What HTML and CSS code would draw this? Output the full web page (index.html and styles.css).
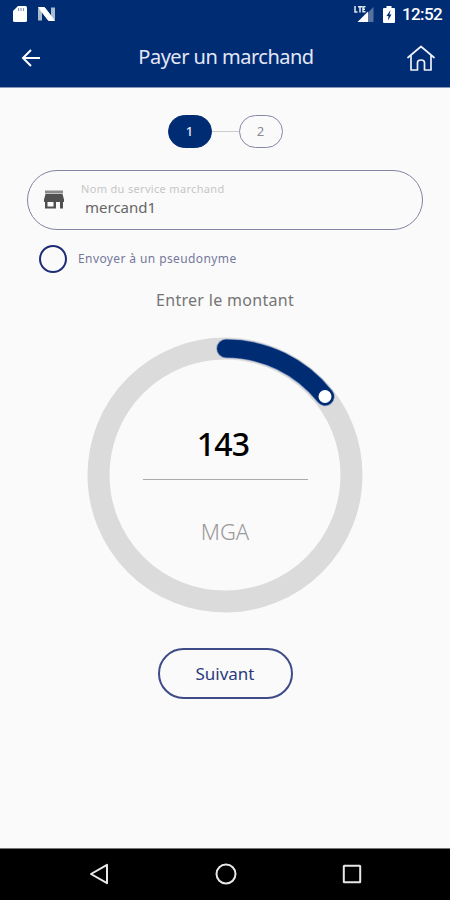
FILE: index.html
```html
<!DOCTYPE html>
<html lang="fr">
<head>
    <meta charset="UTF-8">
    <meta name="viewport" content="width=device-width, initial-scale=1.0">
    <title>Payer un marchand</title>
    <link rel="stylesheet" href="styles.css">
</head>
<body>
    <header class="header">
        <div class="status-bar">
            <svg class="sd" width="14" height="16" viewBox="0 0 14 16">
                <path d="M5 0h7.5Q14 0 14 1.500V14.500Q14 16 12.500 16H1.500Q0 16 0 14.500V5z" fill="#fff"/>
                <path d="M5.500 2v3M8 2v3M10.500 2v3" stroke="#8c98b5" stroke-width="1.200"/>
            </svg>
            <svg class="nougat" width="17" height="14" viewBox="0 0 17 14">
                <path d="M0 1l4 3v9.500H0zM17 13l-4-3V0.500h4z" fill="#a9bccf"/>
                <path d="M0.500 0.500H6.500L16.500 13.500H10.500z" fill="#fff" stroke="#fff"/>
            </svg>
            <svg class="signal" width="20" height="16" viewBox="0 0 20 16">
                <path d="M19.500 1v15H14V6.500z" fill="#56739f"/>
                <path d="M14 5.500V16H3.500z" fill="#fff"/>
                <path d="M1 0v6h2.500M4 0.800h4M6 0.800v5.700M11.500 0.800H9v5h2.500M9 3.300h2" fill="none" stroke="#e4e8f0" stroke-width="1.500"/>
            </svg>
            <svg class="battery" width="12" height="17" viewBox="0 0 12 17">
                <path d="M3.500 0h5v2H11q1 0 1 1v13q0 1-1 1H1q-1 0-1-1V3q0-1 1-1h2.500z" fill="#fff"/>
                <path d="M7.500 4L3.500 10H5.500L5 14.500L8.500 8.500H6.500z" fill="#002c74"/>
            </svg>
            <span class="clock">12:52</span>
        </div>
        <div class="title-bar">
            <svg class="back" width="20" height="18" viewBox="0 0 20 18">
                <path d="M19 9H2M10 1L2 9l8 8" fill="none" stroke="#fff" stroke-width="2"/>
            </svg>
            <h1>Payer un marchand</h1>
            <svg class="home" width="28" height="26" viewBox="0 0 28 26">
                <path d="M1 12.500L14 1.500L27 12.500M4 10.500V25H10.500V17.500Q10.500 15 14 15T17.500 17.500V25H24V10.500" fill="none" stroke="#eef0f8" stroke-width="1.700" stroke-linecap="round" stroke-linejoin="round"/>
            </svg>
        </div>
    </header>

    <main class="content">
        <div class="steps">
            <span class="step active">1</span>
            <span class="line"></span>
            <span class="step">2</span>
        </div>

        <div class="field">
            <svg width="20" height="19" viewBox="0 0 20 19">
                <path d="M1 0.500h18v3H1z" fill="#8a8a8a"/>
                <path d="M1.500 4h17L20 9.500V12h-1v6.500h-3V12h-4v6.500H1V12H0V9.500zM3.500 12v4.500h6V12z" fill="#505050" fill-rule="evenodd"/>
            </svg>
            <div class="field-text">
                <span class="label">Nom du service marchand</span>
                <span class="value">mercand1</span>
            </div>
        </div>

        <div class="option">
            <span class="radio"></span>
            <span class="option-text">Envoyer à un pseudonyme</span>
        </div>

        <h2>Entrer le montant</h2>

        <div class="dial">
            <svg class="ring" width="276" height="276" viewBox="0 0 276 276">
                <circle cx="138" cy="138" r="126.500" fill="none" stroke="#dbdbdb" stroke-width="22"/>
                <path d="M139 11.500A126.500 126.500 0 0 1 238 59.500" fill="none" stroke="#8b9dc0" stroke-width="19.500" stroke-linecap="round"/>
                <path d="M139 11.500A126.500 126.500 0 0 1 238 59.500" fill="none" stroke="#002c74" stroke-width="18" stroke-linecap="round"/>
                <circle cx="238" cy="59.500" r="6.500" fill="#fff"/>
            </svg>
            <div class="amount">
                <span class="number">143</span>
                <span class="currency">MGA</span>
            </div>
        </div>

        <button type="button">Suivant</button>
    </main>

    <nav class="nav-bar">
        <svg width="20" height="22" viewBox="0 0 20 22">
            <path d="M18 1.800V20.200L2 11z" fill="none" stroke="#e8e8e8" stroke-width="2" stroke-linejoin="round"/>
        </svg>
        <svg width="22" height="22" viewBox="0 0 22 22">
            <circle cx="11" cy="11" r="9.500" fill="none" stroke="#e8e8e8" stroke-width="2"/>
        </svg>
        <svg width="20" height="20" viewBox="0 0 20 20">
            <rect x="1.800" y="1.800" width="16.400" height="16.400" rx="0.500" fill="none" stroke="#e8e8e8" stroke-width="2"/>
        </svg>
    </nav>
</body>
</html>
```

FILE: styles.css
```css
* {
    box-sizing: border-box;
}
body {
    margin: 0;
    height: 900px;
    display: flex;
    flex-direction: column;
    background-color: #fafafa;
    font-family: "Noto Sans", sans-serif;
    overflow: hidden;
}
svg {
    display: block;
    flex: none;
}
.header {
    height: 88px;
    background-color: #002c74;
    border-bottom: 1px solid #8b97b8;
    color: white;
}
.status-bar {
    height: 28px;
    display: flex;
    align-items: center;
    padding: 0 8px 0 13px;
}
.nougat {
    margin-left: 11px;
}
.signal {
    margin-left: auto;
}
.battery {
    margin: 0 7px 0 9px;
}
.clock {
    font-family: Roboto, sans-serif;
    font-size: 17px;
    font-weight: 500;
    line-height: 28px;
    width: 40px;
    letter-spacing: -0.6px;
}
.title-bar {
    height: 59px;
    display: flex;
    align-items: center;
    justify-content: space-between;
    padding: 0 15px 0 21px;
}
.home {
    margin-top: 1px;
}
h1 {
    margin: 0;
    padding: 0 0 2px 4px;
    color: #e4e7f6;
    font-size: 20px;
    font-weight: 400;
    line-height: 28px;
    letter-spacing: -0.5px;
}
.content {
    flex: 1;
    display: flex;
    flex-direction: column;
    align-items: center;
    padding-top: 27px;
}
.steps {
    display: flex;
    align-items: center;
    height: 33px;
}
.step {
    width: 44px;
    height: 33px;
    border: 1px solid #8588a5;
    border-radius: 17px;
    color: #8a8a99;
    font-size: 13px;
    line-height: 30px;
    text-align: center;
}
.step.active {
    background-color: #002c74;
    border-color: #002c74;
    color: #e4e7f6;
    font-weight: 500;
}
.line {
    width: 27px;
    height: 1px;
    background-color: #ccc;
}
.field {
    width: 396px;
    height: 60px;
    margin-top: 22px;
    padding: 0 0 2px 16px;
    display: flex;
    align-items: center;
    border: 1px solid #8284a3;
    border-radius: 30px;
}
.field-text {
    display: flex;
    flex-direction: column;
    margin-left: 17px;
}
.label {
    color: #c6c6c6;
    font-size: 11px;
    line-height: 16px;
    letter-spacing: 0.33px;
}
.value {
    padding-left: 4px;
    color: #666;
    font-size: 15px;
    line-height: 21px;
}
.option {
    width: 450px;
    height: 28px;
    margin-top: 15px;
    padding-left: 39px;
    display: flex;
    align-items: center;
}
.radio {
    width: 28px;
    height: 28px;
    border: 2px solid #1e2c78;
    border-radius: 50%;
}
.option-text {
    margin: -2px 0 0 11px;
    color: #74789a;
    font-size: 12px;
    letter-spacing: 0.4px;
}
h2 {
    margin: 15px 0 0;
    color: #757575;
    font-size: 16px;
    font-weight: 400;
    line-height: 24px;
    letter-spacing: 0.3px;
}
.dial {
    display: grid;
    width: 276px;
    height: 276px;
    margin-top: 25px;
}
.ring,
.amount {
    grid-area: 1 / 1;
}
.amount {
    display: flex;
    flex-direction: column;
    align-items: center;
    padding-top: 84px;
}
.number {
    width: 165px;
    height: 59px;
    padding-right: 4px;
    border-bottom: 1px solid #aaa;
    color: #000;
    font-size: 32px;
    font-weight: 500;
    line-height: 46px;
    text-align: center;
    letter-spacing: -0.8px;
}
.currency {
    margin-top: 35px;
    color: #999;
    font-size: 22px;
    font-weight: 300;
    line-height: 32px;
}
button {
    width: 135px;
    height: 51px;
    margin-top: 35px;
    padding: 0 0 1px;
    background-color: transparent;
    border: 2px solid #3e4b86;
    border-radius: 26px;
    color: #293a7c;
    font-family: inherit;
    font-size: 17px;
}
.nav-bar {
    height: 52px;
    display: flex;
    align-items: center;
    justify-content: space-between;
    padding: 0 88px 1px 89px;
    background-color: #000;
    border-top: 1px solid #777;
}
```
